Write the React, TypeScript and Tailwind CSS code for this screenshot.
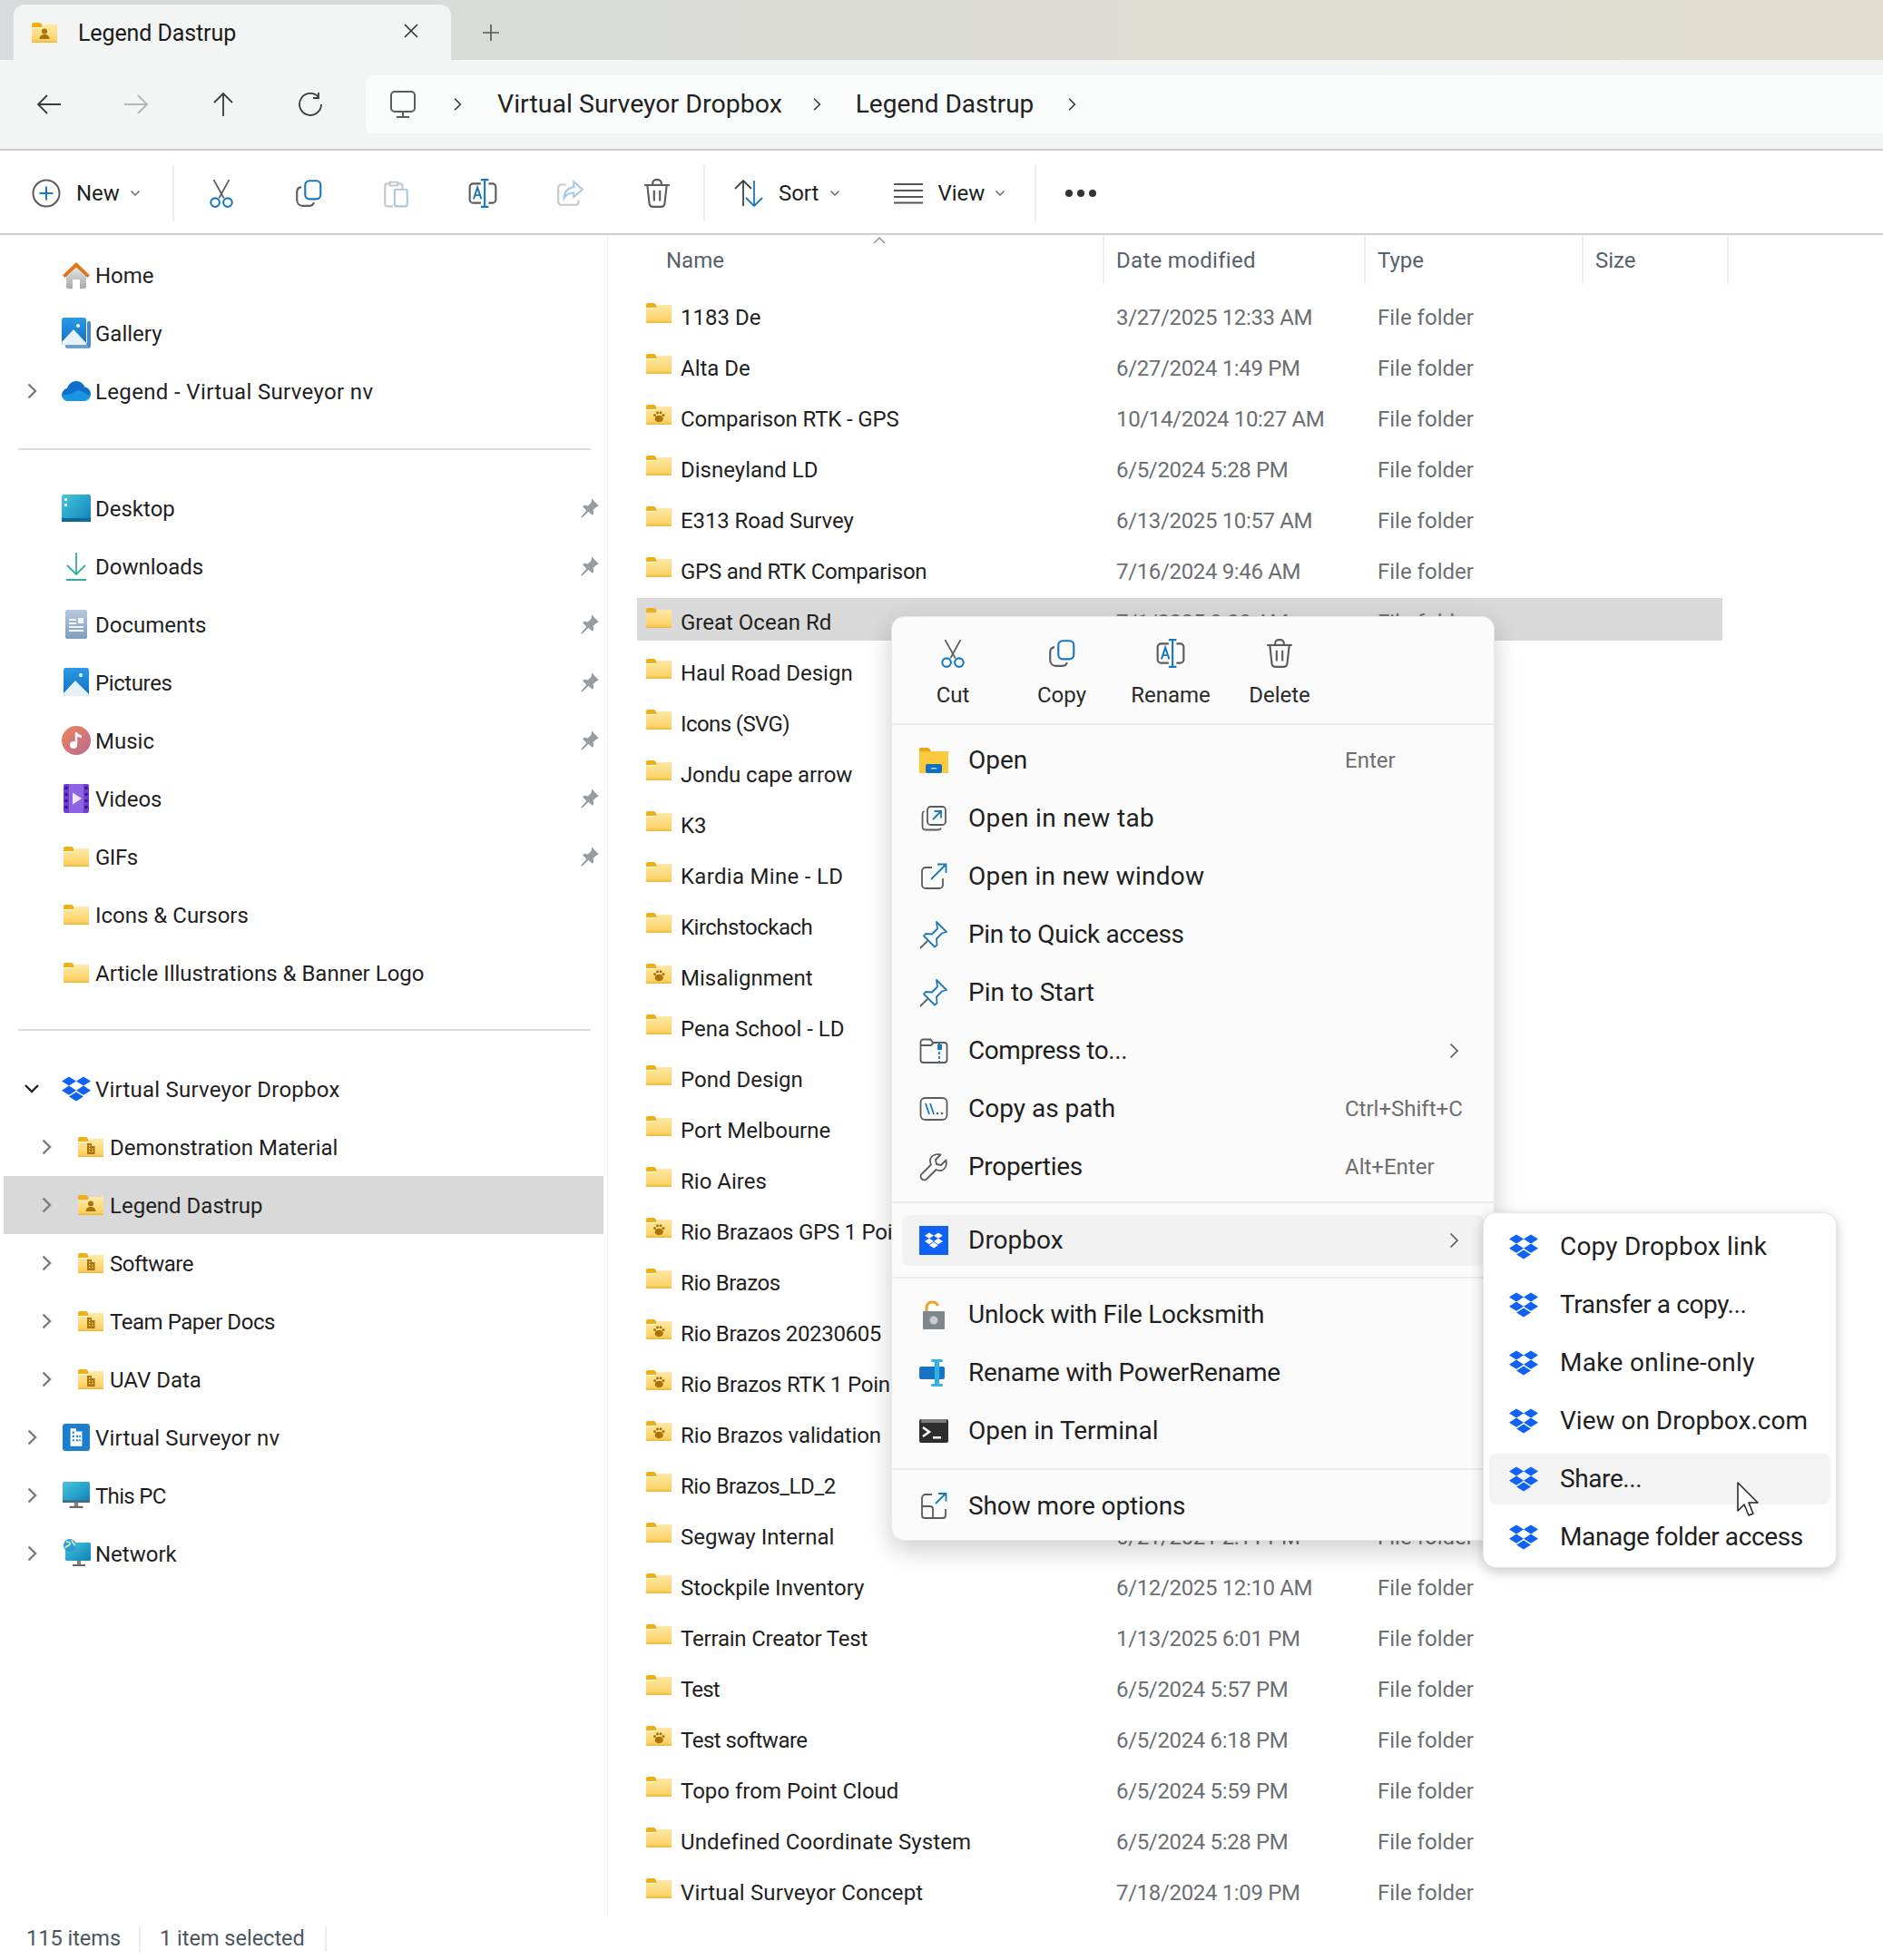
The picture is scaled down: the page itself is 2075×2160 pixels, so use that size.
import React from 'react';

const GRAY = '#5b5b5b';
const BLUE = '#1878bd';
const LIGHT = '#c3c8cc';
const DBX = '#0f62f5';
const DBX_PATH =
  'M6 1.807L0 5.629l6 3.822 6.001-3.822L6 1.807zM18 1.807l-6 3.822 6 3.822 6-3.822-6-3.822zM0 13.274l6 3.822 6.001-3.822L6 9.452l-6 3.822zM18 9.452l-6 3.822 6 3.822 6-3.822-6-3.822zM6 18.371l6.001 3.822 6-3.822-6-3.822L6 18.371z';

const Defs = () => (
  <svg className="absolute w-0 h-0">
    <defs>
      <linearGradient id="folderFill" x1="0" y1="0" x2="0" y2="1">
        <stop offset="0" stopColor="#ffe9a6" />
        <stop offset="0.85" stopColor="#fcd268" />
        <stop offset="1" stopColor="#efb52f" />
      </linearGradient>
      <linearGradient id="houseFill" x1="0" y1="0" x2="0" y2="1">
        <stop offset="0" stopColor="#e8e8e8" />
        <stop offset="1" stopColor="#a9a9a9" />
      </linearGradient>
      <linearGradient id="picFill" x1="0" y1="0" x2="0" y2="1">
        <stop offset="0" stopColor="#2b9be6" />
        <stop offset="1" stopColor="#0f6fc0" />
      </linearGradient>
      <linearGradient id="deskFill" x1="0" y1="0" x2="1" y2="1">
        <stop offset="0" stopColor="#46c8dc" />
        <stop offset="1" stopColor="#0f80b8" />
      </linearGradient>
      <linearGradient id="musicFill" x1="0" y1="0" x2="1" y2="1">
        <stop offset="0" stopColor="#ee8455" />
        <stop offset="1" stopColor="#b96a96" />
      </linearGradient>
      <linearGradient id="docFill" x1="0" y1="0" x2="0" y2="1">
        <stop offset="0" stopColor="#b8c9de" />
        <stop offset="1" stopColor="#7f9dbd" />
      </linearGradient>
    </defs>
  </svg>
);

type Badge = 'paw' | 'person' | 'team' | undefined;

const Folder: React.FC<{ badge?: Badge }> = ({ badge }) => (
  <svg width="28" height="22" viewBox="0 0 28 22" className="shrink-0">
    <path d="M0 2a2 2 0 0 1 2-2h6c1.3 0 2.2.6 3 2l1.4 3H0z" fill="#eeb013" />
    <path d="M0 6h10l3-4h15v20H0z" fill="url(#folderFill)" />
    {badge === 'paw' && (
      <g fill="#a8730c">
        <circle cx="9.5" cy="11.5" r="1.5" />
        <circle cx="12.5" cy="8.8" r="1.5" />
        <circle cx="16" cy="8.8" r="1.5" />
        <circle cx="19" cy="11.5" r="1.5" />
        <ellipse cx="14.2" cy="15.5" rx="4.6" ry="3.8" />
      </g>
    )}
    {badge === 'person' && (
      <g fill="#a8730c">
        <circle cx="14" cy="9.5" r="3" />
        <path d="M8.5 18c0-3.5 2.5-5 5.5-5s5.5 1.500 5.500 5z" />
      </g>
    )}
    {badge === 'team' && (
      <g fill="#a8730c">
        <path d="M10 7h5v3h3.500v9H10zM12 9v1.500h1.500V9zM12 12v1.500h1.500V12zM12 15v1.500h1.500V15zM15.200 12.500v1.200h1.500v-1.200zM15.200 15v1.500h1.500V15z" fillRule="evenodd" />
      </g>
    )}
  </svg>
);

const Dropbox: React.FC<{ size?: number; color?: string }> = ({ size = 32, color = DBX }) => (
  <svg width={size} height={size} viewBox="0 0 24 24" className="shrink-0">
    <path d={DBX_PATH} fill={color} />
  </svg>
);

const Chevron: React.FC<{ color?: string; w?: number; h?: number; sw?: number }> = ({ color = '#7a7a7a', w = 12, h = 20, sw = 2.4 }) => (
  <svg width={w} height={h} viewBox="0 0 12 20" className="shrink-0">
    <path d="M2.500 2.500l7.500 7.500-7.500 7.500" fill="none" stroke={color} strokeWidth={sw} />
  </svg>
);

const SmallChev = () => (
  <svg width="12" height="8" viewBox="0 0 12 8" className="shrink-0">
    <path d="M1.500 1.500L6 6l4.500-4.500" fill="none" stroke="#6a6a6a" strokeWidth="1.500" />
  </svg>
);

const Pin = () => (
  <svg width="24" height="25" viewBox="0 0 22 24" className="shrink-0">
    <path d="M13 1.500l7.500 7.500-2.500 1-3.500 3.500.5 4-1.500 1.500-4-4-6.500 6.500-1.500-.5 6-7-4-4 1.500-1.500 4 .5 3.500-3.500z" fill="#969ca2" />
  </svg>
);

const Ico: React.FC<{ s?: number; children: React.ReactNode }> = ({ s = 34, children }) => (
  <svg width={s} height={s} viewBox="0 0 32 32" fill="none" strokeWidth="1.700" className="shrink-0">
    {children}
  </svg>
);

const CutIcon = () => (
  <Ico>
    <path d="M8 2l10.500 19M24 2L13.500 21" stroke={GRAY} />
    <circle cx="9.500" cy="25.500" r="4.500" stroke={BLUE} strokeWidth="2" />
    <circle cx="22.500" cy="25.500" r="4.500" stroke={BLUE} strokeWidth="2" />
  </Ico>
);
const CopyIcon = () => (
  <Ico>
    <rect x="12.500" y="3" width="16" height="19" rx="4.500" stroke={BLUE} strokeWidth="2" />
    <path d="M8.500 9.500C5.500 10 4 12 4 14.500V23c0 3.500 2.500 6 6 6h7c2.500 0 4-1.500 4.500-3.500" stroke={GRAY} strokeWidth="2" />
  </Ico>
);
const PasteIcon = () => (
  <Ico>
    <path d="M10 6H7.500C6 6 5 7 5 8.500V27c0 1.500 1 2.500 2.500 2.500H13" stroke={LIGHT} strokeWidth="2" />
    <path d="M10 4.500h8V8h-8z M19 6h1.500C22 6 23 7 23 8.500V11" stroke={LIGHT} strokeWidth="2" />
    <rect x="15" y="12" width="13" height="17.500" rx="2" stroke="#a7c9e4" strokeWidth="2" />
  </Ico>
);
const RenameIcon = () => (
  <Ico>
    <path d="M14 6H6a3.500 3.500 0 0 0-3.500 3.500v13A3.500 3.500 0 0 0 6 26h8M22 6h4a3.500 3.500 0 0 1 3.500 3.500v13A3.500 3.500 0 0 1 26 26h-4" stroke={GRAY} strokeWidth="2" />
    <path d="M18 2v28M14 2h8M14 30h8" stroke={BLUE} strokeWidth="2" />
    <path d="M6.500 22L10.500 10l4 12M8 18h5.500" stroke={BLUE} strokeWidth="1.800" />
  </Ico>
);
const ShareIcon = () => (
  <Ico>
    <path d="M12 7H7a3 3 0 0 0-3 3v15a3 3 0 0 0 3 3h15a3 3 0 0 0 3-3v-2" stroke={LIGHT} strokeWidth="2" />
    <path d="M20 4l9 8-9 8v-4.500c-5 0-8 2-10 5.500 0-6 4-11 10-11.500z" stroke="#a7c9e4" strokeWidth="2" />
  </Ico>
);
const DeleteIcon = () => (
  <Ico>
    <path d="M3 7.500h26" stroke={GRAY} strokeWidth="2" />
    <path d="M11.500 7V5.500A3.500 3.500 0 0 1 15 2h2a3.500 3.500 0 0 1 3.500 3.500V7" stroke={GRAY} strokeWidth="2" />
    <path d="M6 8l2 18.500c.2 2 1.500 3.500 4 3.500h8c2.500 0 3.800-1.500 4-3.500L26 8" stroke={GRAY} strokeWidth="2" />
    <path d="M13 13v11M19 13v11" stroke={GRAY} strokeWidth="2" />
  </Ico>
);

const Sidebar = {
  Home: () => (
    <svg width="32" height="32" viewBox="0 0 32 32">
      <path d="M5 16L16 6l11 10v13a2 2 0 0 1-2 2h-5V21h-8v10H7a2 2 0 0 1-2-2z" fill="url(#houseFill)" />
      <path d="M1 16.500L16 2l15 14.500-2.500 2.500L16 7.500 3.500 19z" fill="#e0761a" />
    </svg>
  ),
  Gallery: () => (
    <svg width="32" height="34" viewBox="0 0 32 34">
      <rect x="4" y="28" width="28" height="6" rx="2" fill="#6fa0cc" />
      <rect x="28" y="4" width="4" height="28" rx="1.500" fill="#4a8ac4" />
      <rect width="27" height="30" rx="2.500" fill="url(#picFill)" />
      <circle cx="18" cy="9" r="2" fill="#fff" />
      <path d="M0 27L13 13l14 15v2H2.500A2.500 2.500 0 0 1 0 27.500z" fill="#e6f1fa" />
    </svg>
  ),
  Cloud: () => (
    <svg width="32" height="22" viewBox="0 0 32 22">
      <path d="M7 22a7 7 0 0 1-1-13.900C7.500 3 11.500 0 16 0c4.200 0 7.800 2.500 9.300 6.500A7.700 7.700 0 0 1 32 14a8 8 0 0 1-8 8z" fill="#0f6fc9" />
      <path d="M0 16a7 7 0 0 0 7 6h17a8 8 0 0 0 7.500-5.500L19 9.500 9.500 14z" fill="#1da1ea" opacity=".75" />
    </svg>
  ),
  Desktop: () => (
    <svg width="32" height="32" viewBox="0 0 32 32">
      <rect y="1" width="32" height="30" rx="2" fill="url(#deskFill)" />
      <rect y="27" width="32" height="4" fill="#0c6a95" />
      <rect x="3" y="5" width="3" height="3" fill="#e6f6fb" />
      <rect x="3" y="11" width="3" height="3" fill="#e6f6fb" />
    </svg>
  ),
  Downloads: () => (
    <svg width="32" height="32" viewBox="0 0 32 32" fill="none">
      <path d="M16 1v24M6 15l10 10 10-10" stroke="#36ac9a" strokeWidth="1.800" />
      <path d="M5 31h22" stroke="#36ac9a" strokeWidth="2" />
    </svg>
  ),
  Documents: () => (
    <svg width="32" height="32" viewBox="0 0 32 32">
      <rect x="4" width="24" height="32" rx="2" fill="url(#docFill)" />
      <path d="M8 10h8v2H8zM8 14h8v2H8zM8 18h16v2H8zM8 22h16v2H8z" fill="#f3f6f9" />
      <rect x="18" y="9" width="6" height="6" fill="#f3f6f9" />
    </svg>
  ),
  Pictures: () => (
    <svg width="32" height="32" viewBox="0 0 32 32">
      <rect x="2" width="28" height="31" rx="2.500" fill="url(#picFill)" />
      <circle cx="21" cy="8" r="2" fill="#fff" />
      <path d="M2 28L15 14l15 15v.5a2 2 0 0 1-2 1.500H4.500A2.500 2.500 0 0 1 2 28.500z" fill="#e6f1fa" />
    </svg>
  ),
  Music: () => (
    <svg width="32" height="32" viewBox="0 0 32 32">
      <circle cx="16" cy="16" r="16" fill="url(#musicFill)" />
      <path d="M16 7v13" stroke="#fff" strokeWidth="2.500" />
      <circle cx="13" cy="21" r="4" fill="#fff" />
      <path d="M16 6c1 3 4 3.500 6 4.500v3c-2.500-1-4.500-1.500-6-3z" fill="#fff" />
    </svg>
  ),
  Videos: () => (
    <svg width="32" height="32" viewBox="0 0 32 32">
      <rect x="2" y="0" width="28" height="32" rx="2" fill="#6e3fd1" />
      <rect x="8" y="0" width="16" height="32" fill="#8d63e3" />
      <path d="M3.500 3h3v3h-3zM3.500 10h3v3h-3zM3.500 17h3v3h-3zM3.500 24h3v3h-3zM25.500 3h3v3h-3zM25.500 10h3v3h-3zM25.500 17h3v3h-3zM25.500 24h3v3h-3z" fill="#2f1a78" />
      <path d="M12 9.500L22 16l-10 6.500z" fill="#efe6ff" />
    </svg>
  ),
  Org: () => (
    <svg width="30" height="30" viewBox="0 0 28 28">
      <rect width="28" height="28" rx="3" fill="#1b7fd0" />
      <path d="M8 5h6v3h6v15H8zM10 8v2h2V8zM10 12v2h2v-2zM10 16v2h2v-2zM14 12v2h2v-2zM14 16v2h2v-2zM17 12v2h1.500v-2zM17 16v2h1.500v-2z" fill="#fff" fillRule="evenodd" />
    </svg>
  ),
  PC: () => (
    <svg width="30" height="30" viewBox="0 0 28 28">
      <rect width="28" height="21" rx="1.500" fill="url(#deskFill)" />
      <rect y="19" width="28" height="2.500" fill="#4a6a7a" />
      <rect x="12" y="21" width="4" height="5" fill="#808080" />
      <rect x="7" y="25" width="14" height="2" fill="#666" />
    </svg>
  ),
  Net: () => (
    <svg width="32" height="32" viewBox="0 0 32 32">
      <rect x="4" y="4" width="28" height="20" rx="1.500" fill="url(#deskFill)" />
      <rect x="17" y="24" width="4" height="4" fill="#808080" />
      <rect x="12" y="28" width="14" height="2" fill="#666" />
      <circle cx="9" cy="7" r="7" fill="#2e9bd6" />
      <path d="M5 3c3 0 5 1 4 3S5 7 4 10M11 1c1 3 2 5 4 6" stroke="#bfe6c0" strokeWidth="2" fill="none" />
    </svg>
  ),
};

const Menu = {
  Open: () => (
    <svg width="32" height="28" viewBox="0 0 32 28">
      <path d="M0 2a2 2 0 0 1 2-2h7c1 0 2 .5 3 2l2 3H0z" fill="#e8a70f" />
      <rect y="4" width="32" height="24" fill="#fac93c" />
      <rect x="7" y="18" width="18" height="10" rx="2" fill="#0f6fc0" />
      <rect x="13" y="22" width="6" height="1.500" fill="#ffffff" opacity=".7" />
    </svg>
  ),
  NewTab: () => (
    <Ico s={32}>
      <rect x="9" y="3" width="20" height="20" rx="3.500" stroke={GRAY} strokeWidth="1.800" />
      <path d="M5.500 8C4 8.500 3.500 9.500 3.500 11v14c0 2 1.500 3.500 3.500 3.500h14c1.500 0 2.500-.5 3-2" stroke={GRAY} strokeWidth="1.800" />
      <path d="M15 17l9-9M16.500 8H24v7.500" stroke={BLUE} strokeWidth="1.800" />
    </Ico>
  ),
  NewWindow: () => (
    <Ico s={32}>
      <path d="M14 6H7a4 4 0 0 0-4 4v15a4 4 0 0 0 4 4h15a4 4 0 0 0 4-4v-7" stroke={GRAY} strokeWidth="1.800" />
      <path d="M13 19L29 3M20 2.500h9.500V12" stroke={BLUE} strokeWidth="1.800" />
    </Ico>
  ),
  Pin: () => (
    <Ico s={32}>
      <path d="M19 2l11 11-5 1.500-6 6 .5 7-2.500 2L5 17.500l2-2.500 7 .5 6-6z" stroke={BLUE} strokeWidth="1.800" strokeLinejoin="round" />
      <path d="M1 31l8-8" stroke={GRAY} strokeWidth="1.800" />
    </Ico>
  ),
  Zip: () => (
    <Ico s={32}>
      <path d="M1.500 8V26a3 3 0 0 0 3 3h23a3 3 0 0 0 3-3V10a3 3 0 0 0-3-3H15l-2.500-3.500H4.500a3 3 0 0 0-3 3z" stroke={GRAY} strokeWidth="1.800" />
      <path d="M1.500 10H13l3-3" stroke={GRAY} strokeWidth="1.800" />
      <path d="M22 7v22" stroke={BLUE} strokeWidth="1.800" strokeDasharray="3 2" />
      <rect x="20" y="9" width="5" height="6" fill={BLUE} />
    </Ico>
  ),
  Path: () => (
    <Ico s={32}>
      <rect x="1.500" y="4" width="29" height="24" rx="5" stroke={GRAY} strokeWidth="1.800" />
      <path d="M7 10l4 12M12 10l4 12" stroke={BLUE} strokeWidth="1.800" />
      <circle cx="20" cy="21" r="1.300" fill={GRAY} />
      <circle cx="25" cy="21" r="1.300" fill={GRAY} />
    </Ico>
  ),
  Wrench: () => (
    <Ico s={32}>
      <path d="M29.500 8.500l-5.500 5.500-5-1-1-5 5.500-5.500C18.500 1.500 14 3 12.500 6.500c-1 2.500-.5 5 .5 7L3.500 23a4 4 0 1 0 5.500 5.500L18.500 19c2 1 4.500 1.500 7 .5 3.500-1.500 5-6 4-11z" stroke={GRAY} strokeWidth="1.800" strokeLinejoin="round" />
    </Ico>
  ),
  DropboxBox: () => (
    <svg width="32" height="32" viewBox="0 0 32 32">
      <rect width="32" height="32" fill={DBX} />
      <g transform="translate(6 6) scale(.83)">
        <path d={DBX_PATH} fill="#fff" />
      </g>
    </svg>
  ),
  Lock: () => (
    <svg width="32" height="32" viewBox="0 0 32 32">
      <path d="M8 13V8a6.500 6.500 0 0 1 12.500-2" stroke="#e8a52a" strokeWidth="3" fill="none" />
      <rect x="4" y="12" width="24" height="20" rx="1" fill="#7f868c" />
      <circle cx="16" cy="22" r="4.500" fill="#c9ccd1" />
    </svg>
  ),
  PowerRename: () => (
    <svg width="32" height="30" viewBox="0 0 32 30">
      <rect x="0" y="8" width="28" height="14" rx="2" fill="#1674c4" />
      <rect x="17" y="2" width="5" height="26" fill="#34b0e6" />
      <rect x="13" y="0" width="13" height="3" rx="1.500" fill="#34b0e6" />
      <rect x="13" y="27" width="13" height="3" rx="1.500" fill="#34b0e6" />
    </svg>
  ),
  Terminal: () => (
    <svg width="32" height="26" viewBox="0 0 32 26">
      <rect width="32" height="26" rx="2" fill="#2e2e2e" />
      <rect x="2" y="0" width="28" height="4" fill="#7a7a7a" />
      <path d="M4 9l7 5-7 5" stroke="#fff" strokeWidth="2.500" fill="none" />
      <rect x="15" y="19" width="9" height="2.500" fill="#fff" />
    </svg>
  ),
  More: () => (
    <Ico s={32}>
      <path d="M14 3H7a4 4 0 0 0-4 4v19a3 3 0 0 0 3 3h20a3 3 0 0 0 3-3v-7" stroke={GRAY} strokeWidth="1.800" />
      <path d="M3 16h9a3 3 0 0 1 3 3v10" stroke={GRAY} strokeWidth="1.800" />
      <path d="M18 13L29 2M21 2h8.500v8.500" stroke={BLUE} strokeWidth="1.800" />
    </Ico>
  ),
};

const IconBtn: React.FC<{ children: React.ReactNode }> = ({ children }) => (
  <div className="w-[96px] flex justify-center">{children}</div>
);

const Sep = () => <div className="w-[2px] h-[62px] bg-[#ececec] shrink-0" />;

const TopBars = () => (
  <>
    <div className="h-[66px] bg-gradient-to-r from-[#d7dbdc] to-[#e1decf] pl-[15px] pt-[5px] flex">
      <div className="w-[482px] h-[61px] bg-[#f3f5f5] rounded-t-[12px] flex items-center pl-[20px]">
        <Folder badge="person" />
        <span className="ml-[23px] pt-[3px] text-[25px] tracking-[-0.1px] text-[#1b1b1b]">Legend Dastrup</span>
        <svg width="18" height="18" viewBox="0 0 18 18" className="ml-[184px] -mt-[3px]">
          <path d="M2 2l14 14M16 2L2 16" stroke="#333" strokeWidth="1.600" />
        </svg>
      </div>
      <svg width="20" height="20" viewBox="0 0 20 20" className="ml-[34px] mt-[21px]">
        <path d="M10 1v18M1 10h18" stroke="#555" strokeWidth="1.600" />
      </svg>
    </div>
    <div className="h-[100px] bg-[#f3f5f5] border-b-2 border-[#c9cccc] flex items-center">
      <div className="w-[96px] flex justify-center ml-[6px]">
        <svg width="28" height="26" viewBox="0 0 28 26" fill="none" stroke="#3a3a3a" strokeWidth="1.800"><path d="M27 13H2M12 3L2 13l10 10" /></svg>
      </div>
      <IconBtn>
        <svg width="28" height="26" viewBox="0 0 28 26" fill="none" stroke="#b3b6b8" strokeWidth="1.800"><path d="M1 13h25M16 3l10 10-10 10" /></svg>
      </IconBtn>
      <IconBtn>
        <svg width="26" height="28" viewBox="0 0 26 28" fill="none" stroke="#3a3a3a" strokeWidth="1.800"><path d="M13 27V2M3 12L13 2l10 10" /></svg>
      </IconBtn>
      <IconBtn>
        <svg width="28" height="28" viewBox="0 0 28 28" fill="none" stroke="#3a3a3a" strokeWidth="1.800"><path d="M23 6A12 12 0 1 0 26 14M23 1v6h-6" /></svg>
      </IconBtn>
      <div className="ml-[13px] w-[1672px] h-[64px] bg-[#fbfcfc] rounded-l-[8px] flex items-center pl-[26px]">
        <svg width="30" height="32" viewBox="0 0 30 32" fill="none" stroke="#5a5a5a" strokeWidth="2" className="shrink-0">
          <rect x="2" y="2" width="26" height="22" rx="4" />
          <path d="M15 24v6M8 30h14" />
        </svg>
        <div className="ml-[40px]"><Chevron color="#3a3a3a" w={10} h={18} sw={2} /></div>
        <span className="ml-[39px] text-[28.5px] text-[#222]">Virtual Surveyor Dropbox</span>
        <div className="ml-[33px]"><Chevron color="#3a3a3a" w={10} h={18} sw={2} /></div>
        <span className="ml-[38px] text-[28px] text-[#222]">Legend Dastrup</span>
        <div className="ml-[37px]"><Chevron color="#3a3a3a" w={10} h={18} sw={2} /></div>
      </div>
    </div>
    <div className="h-[93px] pt-[2px] border-b-2 border-[#cfd0d0] flex items-center">
      <svg width="32" height="32" viewBox="0 0 32 32" fill="none" className="ml-[35px] shrink-0">
        <circle cx="16" cy="16" r="14.500" stroke={GRAY} strokeWidth="2" />
        <path d="M16 8.500v15M8.500 16h15" stroke={BLUE} strokeWidth="2" />
      </svg>
      <span className="ml-[17px] text-[24px] text-[#1f1f1f]">New</span>
      <div className="ml-[11px]"><SmallChev /></div>
      <div className="ml-[35px]"><Sep /></div>
      <div className="ml-[4px] flex">
        <IconBtn><CutIcon /></IconBtn>
        <IconBtn><CopyIcon /></IconBtn>
        <IconBtn><PasteIcon /></IconBtn>
        <IconBtn><RenameIcon /></IconBtn>
        <IconBtn><ShareIcon /></IconBtn>
        <IconBtn><DeleteIcon /></IconBtn>
      </div>
      <div className="ml-[3px]"><Sep /></div>
      <svg width="34" height="32" viewBox="0 0 34 32" fill="none" strokeWidth="1.800" className="ml-[31px] shrink-0">
        <path d="M11 30V2M2 11l9-9 9 9" stroke="#444" />
        <path d="M23 2v28M14 21l9 9 9-9" stroke={BLUE} />
      </svg>
      <span className="ml-[16px] text-[24px] text-[#1f1f1f]">Sort</span>
      <div className="ml-[12px]"><SmallChev /></div>
      <svg width="34" height="24" viewBox="0 0 34 24" fill="none" stroke="#555" strokeWidth="1.800" className="ml-[58px] shrink-0">
        <path d="M1 2h32M1 9h32M1 16h32M1 22.500h32" />
      </svg>
      <span className="ml-[15px] text-[24px] text-[#1f1f1f]">View</span>
      <div className="ml-[11px]"><SmallChev /></div>
      <div className="ml-[32px]"><Sep /></div>
      <div className="ml-[32px] flex gap-[5px]">
        <div className="w-[8px] h-[8px] rounded-full bg-[#333]" />
        <div className="w-[8px] h-[8px] rounded-full bg-[#333]" />
        <div className="w-[8px] h-[8px] rounded-full bg-[#333]" />
      </div>
    </div>
  </>
);

const SideRow: React.FC<{
  icon: React.ReactNode;
  label: string;
  chevron?: 'right' | 'down';
  pinned?: boolean;
  nested?: boolean;
  selected?: boolean;
  track?: string;
}> = ({ icon, label, chevron, pinned, nested, selected, track }) => (
  <div className={`h-[64px] flex items-center ${selected ? 'bg-[#d9d9d9]' : ''}`}>
    <div className={`h-full flex items-center shrink-0 ${nested ? 'w-[82px] pl-[41px]' : 'w-[64px] pl-[25px]'}`}>
      {chevron === 'right' && <Chevron />}
      {chevron === 'down' && (
        <svg width="18" height="12" viewBox="0 0 18 12" fill="none" className="-ml-[3px]">
          <path d="M2 2l7 7 7-7" stroke="#222" strokeWidth="2.400" />
        </svg>
      )}
    </div>
    <div className={`shrink-0 flex justify-center ${nested ? 'w-[28px]' : 'w-[32px]'}`}>{icon}</div>
    <span className={`pt-[2px] text-[24px] text-[#1f1f1f] whitespace-nowrap ${nested ? 'ml-[7px]' : 'ml-[5px]'} ${track ?? ''}`}>{label}</span>
    {pinned && <div className="ml-auto mr-[3px]"><Pin /></div>}
  </div>
);

const SidebarPane = () => (
  <div className="w-[670px] h-[1854px] shrink-0 pl-[4px] pr-[4px] pt-[12px] border-r border-[#f0f0f0]">
    <SideRow icon={<Sidebar.Home />} label="Home" />
    <SideRow icon={<Sidebar.Gallery />} label="Gallery" />
    <SideRow icon={<Sidebar.Cloud />} label="Legend - Virtual Surveyor nv" chevron="right" track="tracking-[0.35px]" />
    <div className="mt-[31px] ml-[16px] w-[631px] h-[2px] bg-[#dadada]" />
    <div className="mt-[32px]">
      <SideRow icon={<Sidebar.Desktop />} label="Desktop" pinned />
      <SideRow icon={<Sidebar.Downloads />} label="Downloads" pinned />
      <SideRow icon={<Sidebar.Documents />} label="Documents" pinned />
      <SideRow icon={<Sidebar.Pictures />} label="Pictures" pinned track="tracking-[-0.4px]" />
      <SideRow icon={<Sidebar.Music />} label="Music" pinned />
      <SideRow icon={<Sidebar.Videos />} label="Videos" pinned />
      <SideRow icon={<Folder />} label="GIFs" pinned track="tracking-[-0.5px]" />
      <SideRow icon={<Folder />} label="Icons & Cursors" />
      <SideRow icon={<Folder />} label="Article Illustrations & Banner Logo" />
    </div>
    <div className="mt-[30px] ml-[16px] w-[631px] h-[2px] bg-[#dadada]" />
    <div className="mt-[32px]">
      <SideRow icon={<Dropbox />} label="Virtual Surveyor Dropbox" chevron="down" track="tracking-[0.22px]" />
      <SideRow icon={<Folder badge="team" />} label="Demonstration Material" chevron="right" nested />
      <SideRow icon={<Folder badge="person" />} label="Legend Dastrup" chevron="right" nested selected />
      <SideRow icon={<Folder badge="team" />} label="Software" chevron="right" nested track="tracking-[-0.5px]" />
      <SideRow icon={<Folder badge="team" />} label="Team Paper Docs" chevron="right" nested track="tracking-[-0.45px]" />
      <SideRow icon={<Folder badge="team" />} label="UAV Data" chevron="right" nested />
      <SideRow icon={<Sidebar.Org />} label="Virtual Surveyor nv" chevron="right" track="tracking-[0.2px]" />
      <SideRow icon={<Sidebar.PC />} label="This PC" chevron="right" track="tracking-[-0.7px]" />
      <SideRow icon={<Sidebar.Net />} label="Network" chevron="right" />
    </div>
  </div>
);

// dates of the rows behind the context menu cannot be seen in the picture, so they are left out
const FILES: { name: string; date?: string; paw?: boolean; track?: string }[] = [
  { name: '1183 De', date: '3/27/2025 12:33 AM' },
  { name: 'Alta De', date: '6/27/2024 1:49 PM' },
  { name: 'Comparison RTK - GPS', date: '10/14/2024 10:27 AM', paw: true, track: 'tracking-[-0.15px]' },
  { name: 'Disneyland LD', date: '6/5/2024 5:28 PM' },
  { name: 'E313 Road Survey', date: '6/13/2025 10:57 AM', track: 'tracking-[-0.1px]' },
  { name: 'GPS and RTK Comparison', date: '7/16/2024 9:46 AM', track: 'tracking-[-0.25px]' },
  { name: 'Great Ocean Rd', date: '7/1/2025 9:30 AM' },
  { name: 'Haul Road Design' },
  { name: 'Icons (SVG)', track: 'tracking-[-0.6px]' },
  { name: 'Jondu cape arrow', track: 'tracking-[-0.15px]' },
  { name: 'K3' },
  { name: 'Kardia Mine - LD', track: 'tracking-[0.3px]' },
  { name: 'Kirchstockach', track: 'tracking-[-0.5px]' },
  { name: 'Misalignment', paw: true },
  { name: 'Pena School - LD' },
  { name: 'Pond Design' },
  { name: 'Port Melbourne' },
  { name: 'Rio Aires' },
  { name: 'Rio Brazaos GPS 1 Poi', paw: true, track: 'tracking-[-0.25px]' },
  { name: 'Rio Brazos', track: 'tracking-[-0.4px]' },
  { name: 'Rio Brazos 20230605', paw: true, track: 'tracking-[-0.35px]' },
  { name: 'Rio Brazos RTK 1 Poin', paw: true, track: 'tracking-[-0.25px]' },
  { name: 'Rio Brazos validation', paw: true, track: 'tracking-[-0.1px]' },
  { name: 'Rio Brazos_LD_2', track: 'tracking-[-0.45px]' },
  { name: 'Segway Internal', date: '6/21/2021 2:11 PM' },
  { name: 'Stockpile Inventory', date: '6/12/2025 12:10 AM' },
  { name: 'Terrain Creator Test', date: '1/13/2025 6:01 PM', track: 'tracking-[-0.2px]' },
  { name: 'Test', date: '6/5/2024 5:57 PM', track: 'tracking-[-0.8px]' },
  { name: 'Test software', date: '6/5/2024 6:18 PM', paw: true, track: 'tracking-[-0.5px]' },
  { name: 'Topo from Point Cloud', date: '6/5/2024 5:59 PM' },
  { name: 'Undefined Coordinate System', date: '6/5/2024 5:28 PM', track: 'tracking-[0.1px]' },
  { name: 'Virtual Surveyor Concept', date: '7/18/2024 1:09 PM', track: 'tracking-[0.15px]' },
];

const HeaderCell: React.FC<{ w: string; label: string; children?: React.ReactNode }> = ({ w, label, children }) => (
  <div className={`${w} h-[54px] pt-[2px] border-r-2 border-[#eeeeee] flex items-center relative text-[24px] text-[#56616d]`}>
    {label}
    {children}
  </div>
);

const FileList = () => (
  <div className="flex-1">
    <div className="flex">
      <HeaderCell w="w-[547px] pl-[64px]" label="Name">
        <svg width="14" height="8" viewBox="0 0 14 8" fill="none" className="absolute left-[292px] top-[2px]">
          <path d="M1 7l6-6 6 6" stroke="#8a8a8a" strokeWidth="1.300" />
        </svg>
      </HeaderCell>
      <HeaderCell w="w-[288px] pl-[13px] tracking-[0.3px]" label="Date modified" />
      <HeaderCell w="w-[240px] pl-[13px]" label="Type" />
      <HeaderCell w="w-[160px] pl-[13px]" label="Size" />
    </div>
    <div className="mt-[10px] ml-[32px] w-[1196px] flex flex-col gap-[9px]">
      {FILES.map((f) => (
        <div
          key={f.name}
          className={`h-[47px] grid grid-cols-[528px_288px_1fr] items-center text-[24px] ${f.name === 'Great Ocean Rd' ? 'bg-[#d9d9d9]' : ''}`}
        >
          <div className="flex items-center pl-[10px]">
            <div className="-mt-[4px]"><Folder badge={f.paw ? 'paw' : undefined} /></div>
            <span className={`ml-[10px] pt-[6px] text-[#1f1f1f] whitespace-nowrap ${f.track ?? ''}`}>{f.name}</span>
          </div>
          {f.date && <span className="pt-[6px] text-[#6b6f73] tracking-[-0.35px]">{f.date}</span>}
          {f.date && <span className="pt-[6px] text-[#6b6f73]">File folder</span>}
        </div>
      ))}
    </div>
  </div>
);

const StatusBar = () => (
  <div className="h-[47px] flex items-center text-[23.5px] text-[#4b5560]">
    <span className="ml-[29px] w-[124px]">115 items</span>
    <div className="w-[2px] h-[28px] bg-[#ececec]" />
    <span className="ml-[21px] w-[182px] whitespace-nowrap">1 item selected</span>
    <div className="w-[2px] h-[28px] bg-[#ececec]" />
  </div>
);

const QuickAction: React.FC<{ icon: React.ReactNode; label: string }> = ({ icon, label }) => (
  <div className="w-[120px] flex flex-col items-center pt-[23px]">
    <div className="h-[34px] flex items-center">{icon}</div>
    <span className="mt-[13px] text-[24px] leading-[32px] text-[#2a2a2a]">{label}</span>
  </div>
);

const MenuItem: React.FC<{ icon: React.ReactNode; label: string; shortcut?: string; arrow?: boolean; track?: string }> = ({ icon, label, shortcut, arrow, track }) => (
  <div className="h-[64px] flex items-center pl-[30px]">
    <div className="w-[32px] flex justify-center">{icon}</div>
    <span className={`ml-[22px] w-[415px] text-[28px] text-[#1f1f1f] whitespace-nowrap ${track ?? ''}`}>{label}</span>
    {shortcut && <span className="text-[24px] text-[#6e6e6e] whitespace-nowrap">{shortcut}</span>}
    {arrow && <div className="ml-[114px]"><Chevron color="#555" w={12} h={20} sw={1.600} /></div>}
  </div>
);

const ContextMenu = () => (
  <div className="absolute left-[982px] top-[679px] w-[665px] h-[1019px] bg-[#fbfbfb] rounded-[14px] border border-[#e8e8e8] shadow-[0_10px_28px_rgba(0,0,0,0.2)]">
    <div className="h-[117px] flex pl-[7px]">
      <QuickAction icon={<CutIcon />} label="Cut" />
      <QuickAction icon={<CopyIcon />} label="Copy" />
      <QuickAction icon={<RenameIcon />} label="Rename" />
      <QuickAction icon={<DeleteIcon />} label="Delete" />
    </div>
    <div className="h-[2px] bg-[#ebebeb]" />
    <div className="pt-[7px]">
      <MenuItem icon={<Menu.Open />} label="Open" shortcut="Enter" />
      <MenuItem icon={<Menu.NewTab />} label="Open in new tab" track="tracking-[0.35px]" />
      <MenuItem icon={<Menu.NewWindow />} label="Open in new window" track="tracking-[0.25px]" />
      <MenuItem icon={<Menu.Pin />} label="Pin to Quick access" track="tracking-[-0.35px]" />
      <MenuItem icon={<Menu.Pin />} label="Pin to Start" />
      <MenuItem icon={<Menu.Zip />} label="Compress to..." arrow track="tracking-[-0.45px]" />
      <MenuItem icon={<Menu.Path />} label="Copy as path" shortcut="Ctrl+Shift+C" />
      <MenuItem icon={<Menu.Wrench />} label="Properties" shortcut="Alt+Enter" track="tracking-[-0.3px]" />
    </div>
    <div className="mt-[6px] h-[2px] bg-[#ebebeb]" />
    <div className="mt-[13px] mx-[11px] h-[56px] rounded-[8px] bg-[#f2f2f2] flex items-center pl-[19px]">
      <div className="w-[32px] flex justify-center"><Menu.DropboxBox /></div>
      <span className="ml-[22px] w-[415px] text-[28px] text-[#1f1f1f]">Dropbox</span>
      <div className="ml-[114px]"><Chevron color="#555" w={12} h={20} sw={1.600} /></div>
    </div>
    <div className="mt-[12px] h-[2px] bg-[#ebebeb]" />
    <div className="mt-[8px]">
      <MenuItem icon={<Menu.Lock />} label="Unlock with File Locksmith" track="tracking-[-0.25px]" />
      <MenuItem icon={<Menu.PowerRename />} label="Rename with PowerRename" track="tracking-[-0.25px]" />
      <MenuItem icon={<Menu.Terminal />} label="Open in Terminal" />
    </div>
    <div className="mt-[9px] h-[2px] bg-[#ebebeb]" />
    <div className="mt-[8px]">
      <MenuItem icon={<Menu.More />} label="Show more options" track="tracking-[-0.1px]" />
    </div>
  </div>
);

const SUB: { label: string; track?: string }[] = [
  { label: 'Copy Dropbox link', track: 'tracking-[0.2px]' },
  { label: 'Transfer a copy...', track: 'tracking-[-0.4px]' },
  { label: 'Make online-only', track: 'tracking-[0.3px]' },
  { label: 'View on Dropbox.com' },
  { label: 'Share...', track: 'tracking-[-0.4px]' },
  { label: 'Manage folder access', track: 'tracking-[-0.4px]' },
];

const SubMenu = () => (
  <div className="absolute left-[1634px] top-[1336px] w-[390px] h-[392px] bg-white rounded-[14px] border border-[#e6e6e6] shadow-[0_4px_14px_rgba(0,0,0,0.22)] pt-[5px] px-[6px]">
    {SUB.map((s) => (
      <div key={s.label} className="h-[64px] flex items-center">
        <div className={`w-full h-[56px] rounded-[8px] flex items-center pl-[22px] ${s.label === 'Share...' ? 'bg-[#f3f3f3]' : ''}`}>
          <Dropbox />
          <span className={`ml-[24px] text-[28px] text-[#1f1f1f] whitespace-nowrap ${s.track ?? ''}`}>{s.label}</span>
        </div>
      </div>
    ))}
  </div>
);

const Cursor = () => (
  <svg width="28" height="40" viewBox="0 0 28 40" className="absolute left-[1913px] top-[1633px]">
    <path d="M2 1v31l7-7 5 12 5-2-5-12h10z" fill="#fff" stroke="#222" strokeWidth="1.500" strokeLinejoin="round" />
  </svg>
);

export default function App() {
  return (
    <div className="relative w-[2075px] h-[2160px] overflow-hidden bg-white font-['Roboto','Noto_Sans',sans-serif]">
      <Defs />
      <TopBars />
      <div className="flex">
        <SidebarPane />
        <FileList />
      </div>
      <StatusBar />
      <ContextMenu />
      <SubMenu />
      <Cursor />
    </div>
  );
}
